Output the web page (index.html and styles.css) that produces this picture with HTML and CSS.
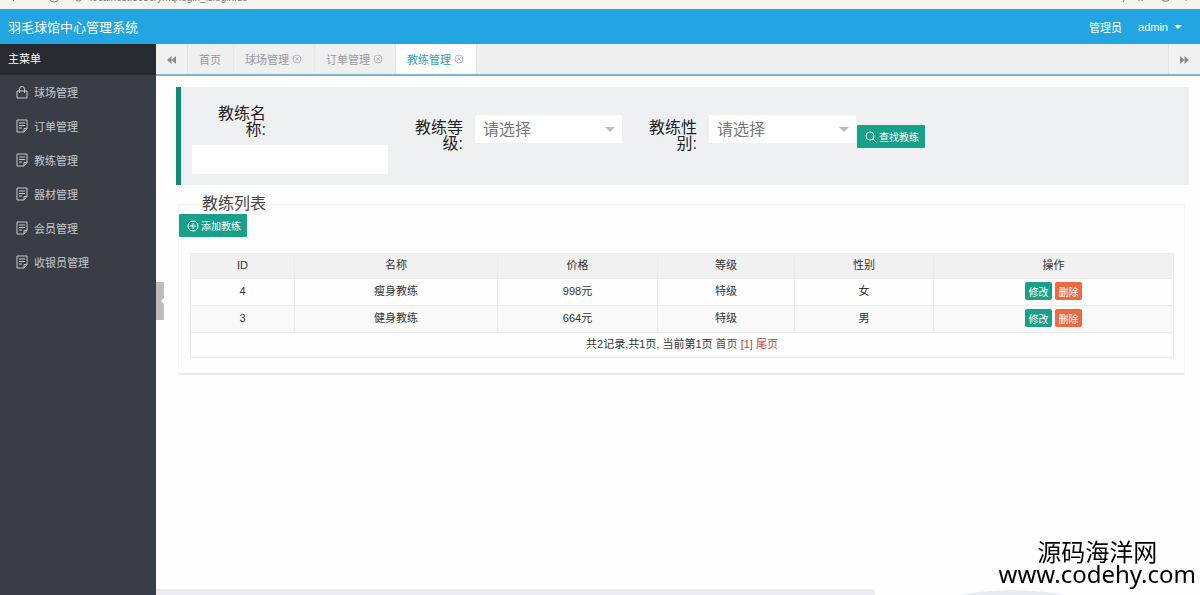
FILE: index.html
```html
<!DOCTYPE html>
<html lang="zh-CN">
  <head>
    <meta charset="UTF-8" />
    <meta name="viewport" content="width=device-width, initial-scale=1.0" />
    <title>羽毛球馆中心管理系统</title>
    <link rel="stylesheet" href="styles.css">
  </head>
  <body>
    <!-- shared icons -->
    <svg class="sprite" aria-hidden="true">
      <symbol id="icon-note" viewBox="0 0 12 14">
        <path d="M1 1h10v8.5L8 13H1z M11 9.5H8V13 M3 4h6 M3 6.5h6 M3 9h3" />
      </symbol>
      <symbol id="icon-bag" viewBox="0 0 12 14">
        <path d="M1 6h10v7H1z M3.5 8V4a2.5 2.5 0 0 1 5 0v4" />
      </symbol>
      <symbol id="icon-close" viewBox="0 0 10 10">
        <circle cx="5" cy="5" r="4" />
        <path d="M3.5 3.5l3 3M6.5 3.5l-3 3" />
      </symbol>
    </svg>

    <div class="browser-bar">
      <svg class="browser-nav" width="90" height="9" viewBox="0 0 90 9">
        <path d="M14 1l-2-2M50 -1a4 3 0 0 0 8 0M75 -1a4 4 0 0 0 7 0" />
      </svg>
      <span class="browser-url">localhost:8080/ymq/login_islogin.do</span>
      <svg class="browser-tools" width="80" height="9" viewBox="0 0 80 9">
        <path d="M5 -1l-2 3M19 -1v2M22 -1v2M41 -1a5 4 0 0 0 9 0M66 -1v2" />
      </svg>
    </div>

    <header class="header">
      <h1 class="header-title">羽毛球馆中心管理系统</h1>
      <div class="header-user">
        <span>管理员</span>
        <a href="#" class="user-link">admin <i class="caret"></i></a>
      </div>
    </header>

    <div class="layout">
      <aside class="sidebar">
        <div class="menu-title">主菜单</div>
        <nav class="menu">
          <a href="#"><svg class="menu-icon"><use href="#icon-bag" /></svg>球场管理</a>
          <a href="#"><svg class="menu-icon"><use href="#icon-note" /></svg>订单管理</a>
          <a href="#"><svg class="menu-icon"><use href="#icon-note" /></svg>教练管理</a>
          <a href="#"><svg class="menu-icon"><use href="#icon-note" /></svg>器材管理</a>
          <a href="#"><svg class="menu-icon"><use href="#icon-note" /></svg>会员管理</a>
          <a href="#"><svg class="menu-icon"><use href="#icon-note" /></svg>收银员管理</a>
        </nav>
        <button class="collapse" aria-label="收起菜单"></button>
      </aside>

      <main class="main">
        <div class="tabs">
          <button class="tab-arrow" aria-label="向左">
            <svg width="9" height="8" viewBox="0 0 9 8"><path d="M4.5 0v8L0 4zM9 0v8L4.5 4z" /></svg>
          </button>
          <a href="#" class="tab">首页</a>
          <a href="#" class="tab">球场管理<svg class="tab-close"><use href="#icon-close" /></svg></a>
          <a href="#" class="tab">订单管理<svg class="tab-close"><use href="#icon-close" /></svg></a>
          <a href="#" class="tab active">教练管理<svg class="tab-close"><use href="#icon-close" /></svg></a>
          <button class="tab-arrow tab-next" aria-label="向右">
            <svg width="9" height="8" viewBox="0 0 9 8"><path d="M0 0v8l4.5-4zM4.5 0v8L9 4z" /></svg>
          </button>
        </div>

        <div class="content">
          <form class="search">
            <div class="field-name">
              <label class="label" for="name">教练名称:</label>
              <input type="text" id="name" class="text-input" />
            </div>
            <div class="field">
              <label class="label" for="level">教练等级:</label>
              <div class="select-box">
                <select id="level"><option>请选择</option></select>
              </div>
            </div>
            <div class="field">
              <label class="label" for="sex">教练性别:</label>
              <div class="select-box">
                <select id="sex"><option>请选择</option></select>
              </div>
            </div>
            <button type="button" class="btn btn-search">
              <svg width="12" height="12" viewBox="0 0 12 12"><circle cx="5" cy="5" r="4" /><path d="M8 8l3.5 3.5" /></svg>
              查找教练
            </button>
          </form>

          <fieldset class="list">
            <legend>教练列表</legend>
            <button type="button" class="btn">
              <svg width="12" height="12" viewBox="0 0 12 12"><circle cx="6" cy="6" r="5" /><path d="M6 3v6M3 6h6" /></svg>
              添加教练
            </button>
            <table class="table">
              <colgroup>
                <col class="col-id"><col class="col-name"><col class="col-price"><col class="col-level"><col class="col-sex"><col>
              </colgroup>
              <thead>
                <tr><th>ID</th><th>名称</th><th>价格</th><th>等级</th><th>性别</th><th>操作</th></tr>
              </thead>
              <tbody>
                <tr>
                  <td>4</td><td>瘦身教练</td><td>998元</td><td>特级</td><td>女</td>
                  <td><div class="actions"><button class="btn-mini">修改</button><button class="btn-mini btn-del">删除</button></div></td>
                </tr>
                <tr class="even">
                  <td>3</td><td>健身教练</td><td>664元</td><td>特级</td><td>男</td>
                  <td><div class="actions"><button class="btn-mini">修改</button><button class="btn-mini btn-del">删除</button></div></td>
                </tr>
              </tbody>
              <tfoot>
                <tr>
                  <td colspan="6">共2记录,共1页, 当前第1页 <a href="#" class="first">首页</a> <a href="#" class="page">[1]</a> <a href="#" class="page">尾页</a></td>
                </tr>
              </tfoot>
            </table>
          </fieldset>
        </div>

        <div class="bottom-bar">
          <div class="bottom-track"></div>
          <svg width="325" height="6" viewBox="0 0 325 6">
            <path d="M84 6q20-4 50-5q40 1 56 5z" />
          </svg>
        </div>
      </main>
    </div>

    <div class="watermark">
      <div>源码海洋网</div>
      <div>www.codehy.com</div>
    </div>
  </body>
</html>
```
FILE: styles.css
```css
* {
  box-sizing: border-box;
}
body {
  margin: 0;
  min-height: 100vh;
  display: flex;
  flex-direction: column;
  font-family: "Liberation Sans", "Noto Sans CJK SC", sans-serif;
  font-size: 11px;
  color: #333;
  background: #fefefe;
}
a {
  color: inherit;
  text-decoration: none;
}
button {
  font-family: inherit;
  border: 0;
  padding: 0;
}
.sprite {
  display: none;
}

/* browser strip */
.browser-bar {
  height: 9px;
  overflow: hidden;
  display: flex;
  align-items: flex-end;
  background: #f5f5f2;
  color: #777;
}
.browser-bar svg {
  fill: none;
  stroke: #777;
}
.browser-url {
  flex: 1;
  font-size: 10px;
  line-height: 18px;
  height: 20px;
}

/* header */
.header {
  height: 35px;
  display: flex;
  align-items: center;
  justify-content: space-between;
  padding: 0 18px 0 8px;
  background: #23a5e1;
  color: #fff;
}
.header-title {
  margin: 0;
  font-size: 13px;
  font-weight: normal;
}
.header-user {
  display: flex;
  gap: 16px;
}
.user-link {
  display: flex;
  align-items: center;
  gap: 6px;
}
.caret {
  border: 4px solid transparent;
  border-top-color: #fff;
  border-bottom: 0;
}

.layout {
  flex: 1;
  display: flex;
}

/* sidebar */
.sidebar {
  position: relative;
  width: 156px;
  flex-shrink: 0;
  background: #393d45;
  color: #c6c8cc;
}
.menu-title {
  height: 31px;
  line-height: 30px;
  padding-left: 8px;
  background: #272b31;
  color: #fff;
}
.menu a {
  display: flex;
  align-items: center;
  gap: 6px;
  height: 34px;
  padding-left: 16px;
}
.menu-icon {
  width: 12px;
  height: 14px;
  fill: none;
  stroke: #c6c8cc;
}
.collapse {
  position: absolute;
  left: 100%;
  top: 238px;
  width: 8px;
  height: 38px;
  display: flex;
  align-items: center;
  justify-content: flex-end;
  background: #bcbcbe;
}
.collapse::after {
  content: "";
  border: 3px solid transparent;
  border-right-color: #fff;
}

/* tabs */
.main {
  flex: 1;
  min-width: 0;
  display: flex;
  flex-direction: column;
}
.tabs {
  display: flex;
  height: 32px;
  background: #f0efef;
  border-bottom: 2px solid #79b9d0;
}
.tab-arrow {
  width: 32px;
  background: #f2f1f1;
  border-right: 1px solid #e2e2e2;
}
.tab-arrow svg {
  fill: #8a8a8a;
}
.tab-next {
  margin-left: auto;
  border-right: 0;
  border-left: 1px solid #e2e2e2;
}
.tab {
  display: flex;
  align-items: center;
  gap: 3px;
  padding: 0 12px 0 11px;
  border-right: 1px solid #e8e8e8;
  color: #999;
}
.tab.active {
  background: #fff;
  color: #2a9fc0;
}
.tab-close {
  width: 10px;
  height: 10px;
  fill: none;
  stroke: #b5b5b5;
}

/* search */
.content {
  flex: 1;
  padding: 11px 11px 0 20px;
}
.search {
  display: flex;
  align-items: flex-start;
  gap: 1px;
  padding: 19px 11px 11px;
  border-left: 5px solid #128a73;
  border-radius: 0 2px 2px 0;
  background: #eff0f2;
  font-size: 16px;
}
.label {
  display: block;
  width: 74px;
  padding-left: 14px;
  line-height: 16px;
  text-align: right;
  color: #222;
}
.text-input {
  display: block;
  width: 196px;
  height: 29px;
  margin-top: 7px;
  border: 0;
  background: #fff;
}
.field {
  display: flex;
  gap: 12px;
  padding-top: 9px;
}
.field .label {
  margin-top: 5px;
}
.select-box {
  position: relative;
}
.select-box::after {
  content: "";
  position: absolute;
  right: 7px;
  top: 12px;
  border: 5px solid transparent;
  border-top-color: #bbb;
  border-bottom: 0;
}
.select-box select {
  appearance: none;
  width: 147px;
  height: 28px;
  padding: 0 8px;
  border: 0;
  border-radius: 0;
  background: #fff;
  font-family: inherit;
  font-size: 16px;
  color: #777;
}
.btn {
  display: flex;
  align-items: center;
  gap: 2px;
  height: 23px;
  padding: 0 6px 0 8px;
  border-radius: 1px;
  background: #17a08a;
  color: #fff;
  font-size: 10px;
}
.btn svg {
  fill: none;
  stroke: #fff;
}
.btn-search {
  margin-top: 19px;
}

/* list */
.list {
  min-width: 0;
  margin: 9px 4px 0 2px;
  padding: 0 0 15px;
  border: 1px solid #f4f4f4;
  border-bottom: 2px solid #eaeaea;
}
.list legend {
  margin-left: 22px;
  padding: 0 1px;
  font-size: 16px;
  line-height: 20px;
  color: #444;
}
.table {
  width: calc(100% - 21px);
  margin: 16px 10px 0 11px;
  table-layout: fixed;
  border-collapse: collapse;
  text-align: center;
  line-height: 16px;
}
.col-id {
  width: 104px;
}
.col-name {
  width: 203px;
}
.col-price {
  width: 160px;
}
.col-level {
  width: 137px;
}
.col-sex {
  width: 139px;
}
.table th,
.table td {
  height: 25px;
  padding: 0 0 2px;
  border: 1px solid #ebebeb;
  font-weight: normal;
}
.table tbody td {
  height: 27px;
}
.table th {
  background: #f1f1f1;
}
.table .even {
  background: #f9f9f9;
}
.actions {
  display: flex;
  justify-content: center;
  gap: 3px;
}
.btn-mini {
  width: 27px;
  height: 18px;
  border-radius: 2px;
  background: #17a08a;
  color: #fff;
  font-size: 10px;
}
.btn-del {
  background: #ee6a3c;
}
.first {
  color: #555;
}
.page {
  color: #c9453c;
}

.bottom-bar {
  display: flex;
  height: 6px;
}
.bottom-track {
  flex: 1;
  background: #ececf0;
  border-radius: 0 4px 0 0;
}
.bottom-bar svg {
  fill: #e9ebf0;
}

.watermark {
  position: fixed;
  right: 4px;
  bottom: 10px;
  font-family: "Noto Sans", "Noto Sans CJK SC", sans-serif;
  font-size: 24px;
  line-height: 22px;
  text-align: center;
  color: #000;
}
```
